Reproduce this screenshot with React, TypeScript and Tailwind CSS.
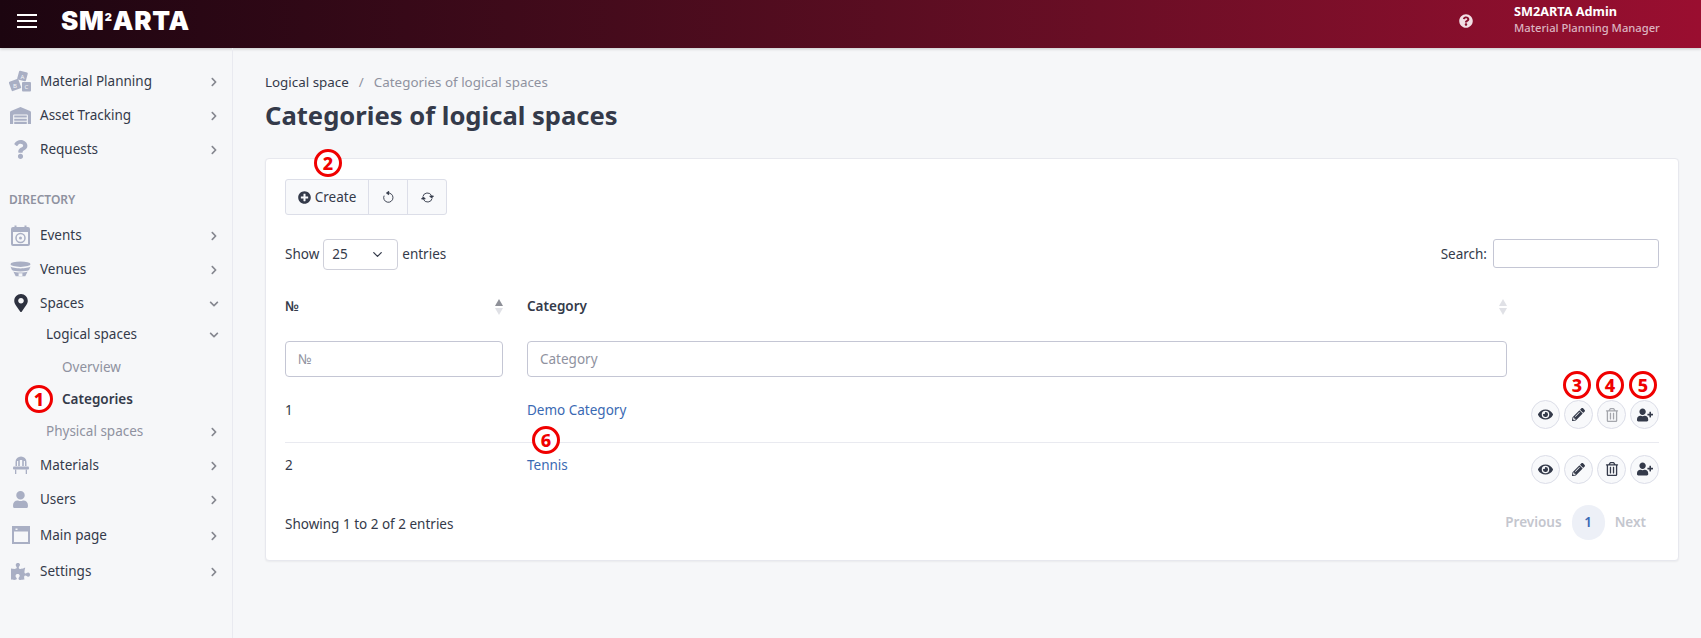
import type { ReactNode } from "react";
import {
  FaChevronDown,
  FaChevronRight,
  FaEye,
  FaMapMarkerAlt,
  FaPencilAlt,
  FaPlusCircle,
  FaPuzzlePiece,
  FaQuestion,
  FaQuestionCircle,
  FaRegTrashAlt,
  FaUser,
  FaUserPlus,
  FaWarehouse,
} from "react-icons/fa";
import { ChevronDown } from "lucide-react";

const BlocksIcon = () => (
  <svg viewBox="0 0 24 22" className="h-[22px] w-[24px]">
    <rect x="9" y="1.5" width="9" height="9" rx="1" transform="rotate(15 13.5 6)" fill="#a9afc4" />
    <rect x="1" y="10" width="10" height="10" rx="1" transform="rotate(-20 6 15)" fill="#a9afc4" />
    <rect x="13" y="12" width="9" height="9.5" rx="1" fill="#a9afc4" />
    <text x="13.5" y="9" fontSize="6" textAnchor="middle" fill="#f6f7f9">A</text>
    <text x="6" y="17.5" fontSize="6" textAnchor="middle" fill="#f6f7f9">B</text>
    <text x="17.5" y="19" fontSize="6" textAnchor="middle" fill="#f6f7f9">C</text>
  </svg>
);

const CalendarIcon = () => (
  <svg viewBox="0 0 20 21" className="h-[21px] w-[20px]">
    <rect x="1" y="3" width="17" height="17" rx="1" fill="none" stroke="#a9afc4" strokeWidth="2" />
    <rect x="1" y="3" width="17" height="4" fill="#a9afc4" />
    <rect x="3.5" y="0.5" width="2" height="4" fill="#a9afc4" />
    <rect x="13.5" y="0.5" width="2" height="4" fill="#a9afc4" />
    <circle cx="9.5" cy="13" r="4.5" fill="none" stroke="#a9afc4" strokeWidth="1.5" />
    <circle cx="9.5" cy="13" r="1.5" fill="#a9afc4" />
  </svg>
);

const StadiumIcon = () => (
  <svg viewBox="0 0 22 16" className="h-[16px] w-[21px]">
    <ellipse cx="11" cy="3" rx="10.5" ry="2.8" fill="#a9afc4" />
    <path d="M0.5 5.5 C3 8 19 8 21.5 5.5 L20 9 C17 11 5 11 2 9 Z" fill="#a9afc4" />
    <path d="M3.5 10.5 C6 12 16 12 18.5 10.5 L16 15.5 H6 Z" fill="#a9afc4" />
    <path d="M9 15.5 V12.5 H13 V15.5 Z" fill="#f6f7f9" />
  </svg>
);

const ChairIcon = () => (
  <svg viewBox="0 0 16 18" className="h-[18px] w-[16px]" fill="#a9afc4">
    <path d="M2.5 10 V6 A5.5 5.5 0 0 1 13.5 6 V10 H12 V5 H10.8 V10 H9.2 V4 H6.8 V10 H5.2 V5 H4 V10 Z" />
    <rect x="0" y="10.5" width="16" height="3" rx="1" />
    <rect x="2" y="13.5" width="1.3" height="4.5" />
    <rect x="12.7" y="13.5" width="1.3" height="4.5" />
  </svg>
);

const WindowIcon = () => (
  <svg viewBox="0 0 18 18" className="h-[18px] w-[18px]">
    <rect x="1" y="1" width="16" height="16" fill="none" stroke="#a9afc4" strokeWidth="2" />
    <rect x="1" y="1" width="16" height="4.5" fill="#a9afc4" />
    <rect x="3.5" y="2.5" width="2" height="1.5" fill="#f6f7f9" />
  </svg>
);

const UndoIcon = () => (
  <svg viewBox="0 0 14 14" className="h-[13px] w-[13px]" fill="none" stroke="#343a4a" strokeWidth="1">
    <path d="M6 2.2 A5 5 0 1 1 2.3 5" />
    <path d="M7.2 0.4 L4.8 2.2 L7.2 4 Z" fill="#343a4a" />
  </svg>
);

const SyncIcon = () => (
  <svg viewBox="0 0 14 14" className="h-[13px] w-[13px]" fill="none" stroke="#343a4a" strokeWidth="1">
    <path d="M2 6 A5 5 0 0 1 11.4 5" />
    <path d="M12 8 A5 5 0 0 1 2.6 9" />
    <path d="M9.4 5.4 L13.4 5.4 L11.4 7.6 Z" fill="#343a4a" />
    <path d="M4.6 8.6 L0.6 8.6 L2.6 6.4 Z" fill="#343a4a" />
  </svg>
);

function NavItem({ icon, label, open }: { icon: ReactNode; label: string; open?: boolean }) {
  return (
    <div className="flex h-[34px] items-center">
      <span className="flex w-[39px] shrink-0 justify-center">{icon}</span>
      <span className="flex-1 text-[#343a4a]">{label}</span>
      {open ? (
        <FaChevronDown className="mt-[1px] mr-[13px] text-[10px] text-[#85878f]" />
      ) : (
        <FaChevronRight className="mt-[1px] mr-[13px] text-[10px] text-[#85878f]" />
      )}
    </div>
  );
}

function Marker({ n, className }: { n: number; className: string }) {
  return (
    <span
      className={`absolute flex h-[28px] w-[28px] items-center justify-center rounded-full border-[3px] border-[#f00000] bg-white text-[18px] leading-none font-extrabold text-[#f00000] ${className}`}
    >
      {n}
    </span>
  );
}

function ActionBtn({ children, muted }: { children: ReactNode; muted?: boolean }) {
  return (
    <button
      className={`flex h-[29px] w-[29px] items-center justify-center rounded-full border border-[#dcdee8] bg-[#f8f9fb] text-[14px] ${
        muted ? "text-[#a4a6ac]" : "text-[#343a4a]"
      }`}
    >
      {children}
    </button>
  );
}

function Actions({ disabled }: { disabled?: boolean }) {
  return (
    <div className="flex justify-end gap-[4px]">
      <ActionBtn>
        <FaEye className="text-[15px]" />
      </ActionBtn>
      <ActionBtn>
        <FaPencilAlt className="text-[13px]" />
      </ActionBtn>
      <ActionBtn muted={disabled}>
        <FaRegTrashAlt />
      </ActionBtn>
      <ActionBtn>
        <FaUserPlus className="text-[16px]" />
      </ActionBtn>
    </div>
  );
}

function SortArrows({ active }: { active?: boolean }) {
  return (
    <span className="flex flex-col gap-[2px]">
      <span
        className={`h-0 w-0 border-x-[4px] border-b-[7px] border-x-transparent ${
          active ? "border-b-[#8e9098]" : "border-b-[#e0e1e6]"
        }`}
      />
      <span className="h-0 w-0 border-x-[4px] border-t-[7px] border-x-transparent border-t-[#e0e1e6]" />
    </span>
  );
}

export default function App() {
  return (
    <div className="relative flex h-[638px] flex-col overflow-hidden bg-[#f6f7f9] font-['Noto_Sans',sans-serif] text-[13.5px] text-[#343a4a]">
      <header className="flex h-[48px] shrink-0 items-center bg-gradient-to-r from-[#1c0510] to-[#9a0e30] pb-[6px] shadow-[0_1px_3px_rgba(0,0,0,0.2)]">
        <div className="ml-[17px] flex w-[20px] flex-col gap-[4px]">
          <span className="h-[2px] bg-white" />
          <span className="h-[2px] bg-white" />
          <span className="h-[2px] bg-white" />
        </div>
        <span className="ml-[24px] flex-1 font-['Inter',sans-serif] text-[26px] leading-none font-black tracking-[0.8px] text-white">
          SM<sup className="top-[-9px] text-[11px]">2</sup>ARTA
        </span>
        <FaQuestionCircle className="text-[14px] text-[#f1dfe4]" />
        <div className="mr-[15px] ml-[41px] w-[172px] pb-[4px]">
          <div className="text-[12.7px] leading-[16px] font-bold text-white">SM2ARTA Admin</div>
          <div className="text-[11.2px] leading-[17px] font-medium text-[#dcb4c0]">Material Planning Manager</div>
        </div>
      </header>
      <div className="flex flex-1">
        <aside className="w-[233px] shrink-0 border-r border-[#e9eaf0] pt-[16px] pl-[1px]">
          <NavItem icon={<BlocksIcon />} label="Material Planning" />
          <NavItem icon={<FaWarehouse className="text-[21px] text-[#a9afc4]" />} label="Asset Tracking" />
          <NavItem icon={<FaQuestion className="text-[19px] text-[#a9afc4]" />} label="Requests" />
          <div className="mt-[22px] mb-[6px] pl-[8px] text-[12px] leading-[24px] font-semibold text-[#8f92a0]">DIRECTORY</div>
          <NavItem icon={<CalendarIcon />} label="Events" />
          <NavItem icon={<StadiumIcon />} label="Venues" />
          <NavItem icon={<FaMapMarkerAlt className="text-[18px] text-[#2e3240]" />} label="Spaces" open />
          <div className="flex h-[32px] items-center pb-[3px] pl-[45px]">
            <span className="flex-1">Logical spaces</span>
            <FaChevronDown className="mt-[1px] mr-[13px] text-[10px] text-[#85878f]" />
          </div>
          <div className="flex h-[32px] items-center pb-[2px] pl-[61px] text-[#8f92a0]">Overview</div>
          <div className="flex h-[32px] items-center pb-[2px] pl-[61px] font-semibold text-[#343a4a]">Categories</div>
          <div className="flex h-[32px] items-center pb-[1px] pl-[45px] text-[#8f92a0]">
            <span className="flex-1">Physical spaces</span>
            <FaChevronRight className="mt-[1px] mr-[13px] text-[10px] text-[#85878f]" />
          </div>
          <NavItem icon={<ChairIcon />} label="Materials" />
          <NavItem icon={<FaUser className="text-[17px] text-[#a9afc4]" />} label="Users" />
          <div className="pt-[2px]">
            <NavItem icon={<WindowIcon />} label="Main page" />
          </div>
          <div className="pt-[2px]">
            <NavItem icon={<FaPuzzlePiece className="text-[19px] text-[#a9afc4]" />} label="Settings" />
          </div>
        </aside>
        <main className="flex-1 pt-[24px] pr-[22px] pl-[32px]">
          <nav className="flex gap-[10px] text-[13.4px] leading-[20px]">
            <span>Logical space</span>
            <span className="text-[#8f92a0]">/</span>
            <span className="text-[#8f92a0]">Categories of logical spaces</span>
          </nav>
          <h1 className="mt-[7px] text-[25.6px] leading-[34px] font-bold text-[#343a4a]">Categories of logical spaces</h1>
          <section className="mt-[25px] h-[403px] rounded-[4px] border border-[#e7e8ee] bg-white px-[19px] pt-[20px] shadow-[0_1px_2px_rgba(0,0,0,0.05)]">
            <div className="flex h-[36px] w-[162px] rounded-[3px] border border-[#dcdee8] bg-[#f8f9fb] text-[#343a4a]">
              <button className="flex w-[83px] items-center justify-center gap-[4px] border-r border-[#dcdee8]">
                <FaPlusCircle className="text-[13px]" /> Create
              </button>
              <button className="flex w-[39px] items-center justify-center border-r border-[#dcdee8]">
                <UndoIcon />
              </button>
              <button className="flex flex-1 items-center justify-center">
                <SyncIcon />
              </button>
            </div>
            <div className="mt-[24px] flex h-[31px] items-center">
              <span>Show</span>
              <span className="mx-[4px] flex h-[31px] w-[75px] items-center justify-between rounded-[4px] border border-[#cfd0da] pr-[12px] pl-[8px]">
                25 <ChevronDown size={15} />
              </span>
              <span>entries</span>
              <span className="ml-auto">Search:</span>
              <span className="mb-[2px] ml-[6px] h-[29px] w-[166px] rounded-[3px] border border-[#c4c6d4]" />
            </div>
            <table className="mt-[16px] w-full table-fixed border-collapse">
              <colgroup>
                <col className="w-[242px]" />
                <col />
                <col className="w-[128px]" />
              </colgroup>
              <thead>
                <tr className="h-[41px] text-left">
                  <th className="pr-[24px] font-semibold">
                    <div className="flex items-center justify-between">
                      <span>№</span>
                      <SortArrows active />
                    </div>
                  </th>
                  <th className="pr-[24px] font-semibold">
                    <div className="flex items-center justify-between">
                      <span>Category</span>
                      <SortArrows />
                    </div>
                  </th>
                  <th />
                </tr>
                <tr>
                  <td className="pt-[14px] pr-[24px]">
                    <input placeholder="№" className="block h-[36px] w-full rounded-[4px] border border-[#c4c6d4] px-[12px] placeholder:text-[#8f92a0]" />
                  </td>
                  <td className="pt-[14px] pr-[24px]">
                    <input placeholder="Category" className="block h-[36px] w-full rounded-[4px] border border-[#c4c6d4] px-[12px] placeholder:text-[#8f92a0]" />
                  </td>
                  <td />
                </tr>
              </thead>
              <tbody>
                <tr className="h-[65px] border-b border-[#e9eaf0]">
                  <td className="pt-[2px]">1</td>
                  <td className="pt-[2px] text-[#3a69b3]">Demo Category</td>
                  <td className="pt-[11px]">
                    <Actions disabled />
                  </td>
                </tr>
                <tr className="h-[54px]">
                  <td className="pb-[8px]">2</td>
                  <td className="pb-[8px] text-[#3a69b3]">Tennis</td>
                  <td>
                    <Actions />
                  </td>
                </tr>
              </tbody>
            </table>
            <div className="mt-[9px] flex items-center justify-between">
              <span className="pt-[3px]">Showing 1 to 2 of 2 entries</span>
              <div className="flex items-center gap-[10px] pr-[13px] font-semibold text-[#c4c6ce]">
                <span>Previous</span>
                <span className="flex h-[35px] w-[33px] items-center justify-center rounded-full bg-[#edf0f7] text-[#3a69b3]">1</span>
                <span>Next</span>
              </div>
            </div>
          </section>
        </main>
      </div>
      <Marker n={1} className="top-[385px] left-[25px]" />
      <Marker n={2} className="top-[149px] left-[314px]" />
      <Marker n={3} className="top-[371px] left-[1563px]" />
      <Marker n={4} className="top-[371px] left-[1596px]" />
      <Marker n={5} className="top-[371px] left-[1629px]" />
      <Marker n={6} className="top-[426px] left-[532px]" />
    </div>
  );
}
